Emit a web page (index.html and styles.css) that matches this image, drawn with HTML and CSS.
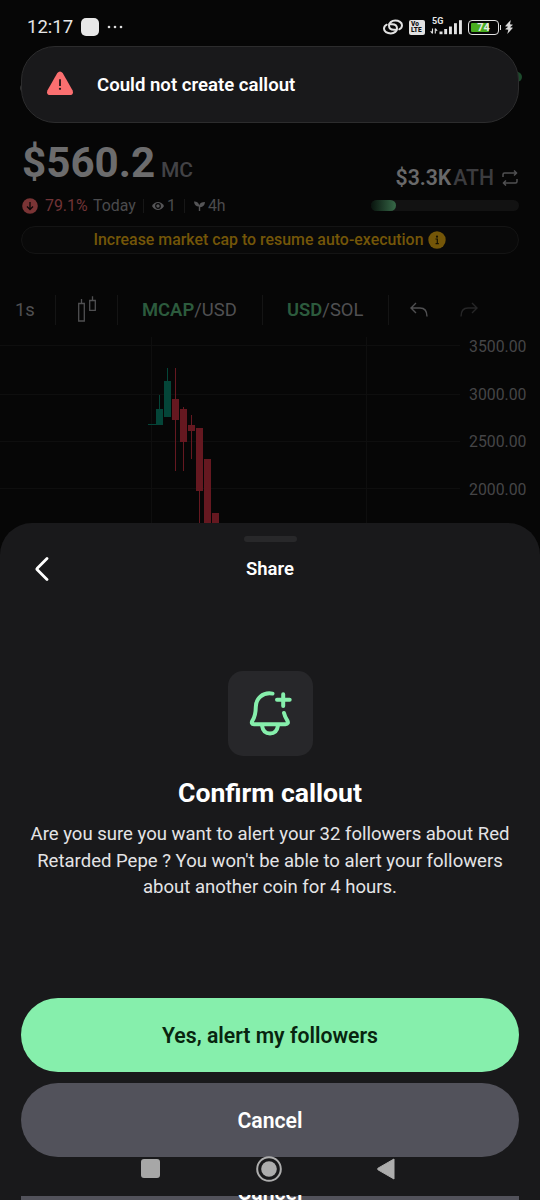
FILE: index.html
```html
<!DOCTYPE html>
<html lang="en">
<head>
<meta charset="utf-8">
<title>Share</title>
<link rel="stylesheet" href="styles.css">
</head>
<body>
<div class="phone">
  <header class="status">
    <span class="clock">12:17</span>
    <span class="app-dot"></span>
    <svg class="more" width="16" height="4" viewBox="0 0 16 4" fill="#ddd"><circle cx="2" cy="2" r="1.300"/><circle cx="8" cy="2" r="1.300"/><circle cx="14" cy="2" r="1.300"/></svg>
    <svg class="link" width="22" height="18" viewBox="0 0 22 18" fill="none" stroke="#e2e2e2" stroke-width="2" stroke-linecap="round"><path d="M14.500 11.800H12C8.700 11.800 7 10 7 7.500S9.500 2.600 13.200 2.600S20 4.600 20 7.200C20 9 19 10.500 17.300 11.300"/><path d="M7.500 6.200H10C13.300 6.200 15 8 15 10.500S12.500 15.400 8.800 15.400S2 13.400 2 10.800C2 9 3 7.500 4.700 6.700"/></svg>
    <span class="volte"><span>Vo</span><span>LTE</span></span>
    <span class="signal">
      <b>5G</b>
      <svg width="33" height="16" viewBox="0 0 33 16" fill="#e2e2e2"><path d="M2.500 9.500v5M.7 12.200l1.800 2.300M5.300 14.500v-5M5.300 9.500l1.800 2.300" fill="none" stroke="#e2e2e2" stroke-width="1.100"/><rect x="9.500" y="12.500" width="3" height="2.700"/><rect x="14.200" y="10" width="2.900" height="5.200"/><rect x="19" y="7.500" width="2.900" height="7.700"/><rect x="24" y="4.200" width="2.900" height="11"/><rect x="29" y="1.200" width="2.900" height="14"/></svg>
    </span>
    <span class="battery"><i></i><b>74</b></span>
    <span class="tip"></span>
    <svg class="bolt" width="10" height="16" viewBox="0 0 10 16" fill="#d8d8d8"><path d="M6.800 1L1 7.200l3.200.6L1 10.300l3.300.4L3.300 15L9 8.800l-3-.5L9 5.700l-3-.4z"/></svg>
  </header>

  <main class="coin">
    <div class="peek"><span class="peek-left"></span><span class="peek-right"></span></div>
    <section class="stats">
      <div class="stats-left">
        <div class="price"><strong>$560.2</strong><span>MC</span></div>
        <div class="meta">
          <svg class="down" width="16" height="16" viewBox="0 0 16 16"><circle cx="8" cy="8" r="7.800" fill="#7a3435"/><path d="M8 4v7.400M5 8.500L8 11.500l3-3" fill="none" stroke="#0b0707" stroke-width="1.300"/></svg>
          <span class="loss">79.1%</span><span class="today">Today</span>
          <i class="bar"></i>
          <svg class="eye" width="12" height="10" viewBox="0 0 12 10"><path d="M0 5C2.800-.3 9.200-.3 12 5C9.200 10.300 2.800 10.300 0 5z" fill="#555557"/><circle cx="6" cy="5" r="2.300" fill="#555557" stroke="#060606" stroke-width="1.200"/></svg>
          <span>1</span>
          <i class="bar second"></i>
          <svg class="sprout" width="11" height="10" viewBox="0 0 11 10" fill="#555557"><path d="M0 .5C3 .4 4.700 1.800 5.300 4.200C6 2 7.600 1 11 1C10.800 4.200 9 6 6.200 6.200L6.200 10H4.800V5.600C2 5.600.3 3.700 0 .5z"/></svg>
          <span class="age">4h</span>
        </div>
      </div>
      <div class="stats-right">
        <div class="ath"><strong>$3.3K</strong><span>ATH</span>
          <svg width="16" height="16" viewBox="0 0 16 16" fill="none" stroke="#505052" stroke-width="1.500" stroke-linejoin="round"><path d="M1 7V4.500q0-1.500 1.500-1.500H14.500M12 .5L14.600 3L12 5.500M15 9v2.500q0 1.500-1.500 1.500H1.500M4 10.500L1.400 13L4 15.500"/></svg>
        </div>
        <div class="progress"><i></i></div>
      </div>
    </section>
    <div class="notice"><span>Increase market cap to resume auto-execution</span>
      <svg width="18" height="18" viewBox="0 0 18 18"><circle cx="9" cy="9" r="8.700" fill="#745608"/><circle cx="9" cy="5.700" r="1.100" fill="#171202"/><path d="M7.500 8H9.300V12.500M7.600 12.600H10.800" stroke="#171202" stroke-width="1.200" fill="none"/></svg>
    </div>
    <nav class="tools">
      <span class="interval">1s</span>
      <span class="type"><svg width="20" height="28" viewBox="0 0 20 28" fill="none" stroke="#505052" stroke-width="1.300"><path d="M1.700 7.500h5.600v17.500H1.700zM4.500 3v4.500M12.700 4.500h5.600v9.800h-5.600zM15.500 .2v4.300"/></svg></span>
      <span class="pair mc"><b>MCAP</b>/USD</span>
      <span class="pair sol"><b>USD</b>/SOL</span>
      <span class="history">
        <svg width="18" height="16" viewBox="0 0 18 16" fill="none" stroke="#505052" stroke-width="1.400"><path d="M6 1L1 6l5 5M1 6h9q7 0 7 8.500"/></svg>
        <svg width="18" height="16" viewBox="0 0 18 16" fill="none" stroke="#262627" stroke-width="1.400"><path d="M12 1l5 5l-5 5M17 6H8Q1 6 1 14.500"/></svg>
      </span>
    </nav>
    <section class="chart">
      <svg class="plot" width="460" height="188" viewBox="0 0 460 188">
        <path d="M0 8.500H460M0 57.500H460M0 104.500H460M0 151.500H460M151.500 0V188M366.500 0V188" stroke="#0e0e0e"/>
        <g fill="#044538"><rect x="148" y="87" width="8" height="1"/><rect x="156" y="72" width="7" height="16"/><rect x="159" y="58" width="1" height="15"/><rect x="164" y="44" width="7" height="36"/><rect x="167" y="31" width="1" height="14"/></g>
        <g fill="#651820"><rect x="172" y="62" width="7" height="21"/><rect x="175" y="31" width="1" height="103"/><rect x="180" y="72" width="7" height="33"/><rect x="183" y="70" width="1" height="64"/><rect x="188" y="88" width="7" height="6"/><rect x="191" y="78" width="1" height="44"/><rect x="196" y="91" width="7" height="63"/><rect x="199" y="154" width="1" height="34"/><rect x="204" y="122" width="7" height="66"/><rect x="212" y="176" width="7" height="12"/></g>
      </svg>
      <div class="scale"><span>3500.00</span><span>3000.00</span><span>2500.00</span><span>2000.00</span></div>
    </section>
  </main>

  <div class="toast">
    <svg width="28" height="25" viewBox="0 0 28 26"><path d="M11.200 2.200Q14-1.400 16.800 2.200L27 20Q28.800 24.800 24 25H4Q-.8 24.800 1 20z" fill="#fb6f70"/><path d="M14 8.500v7" stroke="#24191b" stroke-width="1.900"/><circle cx="14" cy="18.500" r="1.200" fill="#24191b"/></svg>
    <span>Could not create callout</span>
  </div>

  <section class="sheet">
    <div class="grip"></div>
    <div class="sheet-head">
      <svg width="14" height="26" viewBox="0 0 14 26" fill="none" stroke="#fff" stroke-width="2.800" stroke-linecap="round" stroke-linejoin="round"><path d="M12 2.500L2.300 12.200q-.8.800 0 1.600L12 23.500"/></svg>
      <h2>Share</h2>
    </div>
    <div class="bell">
      <svg width="44" height="48" viewBox="0 0 44 48" fill="none" stroke="#86efac" stroke-width="4" stroke-linecap="round" stroke-linejoin="round"><path d="M24.500 4.600C14.500 3 8 9.300 7.800 18C7.700 25.500 6.500 28.500 4.500 31.500C3.200 33.800 3.800 35.200 6 35.200H37.500C39.800 35.200 40.500 33.800 39.300 31.500C37.600 28.600 36.500 26.700 36 24M14 36.500C14.800 42 18 44.500 22 44.500S29.200 42 30 36.500M35.200 5.200V17M29 10.800H41.700"/></svg>
    </div>
    <h1>Confirm callout</h1>
    <p>Are you sure you want to alert your 32 followers about Red<br>Retarded Pepe ? You won't be able to alert your followers<br>about another coin for 4 hours.</p>
    <div class="actions">
      <button class="yes">Yes, alert my followers</button>
      <button class="cancel">Cancel</button>
    </div>
    <div class="edge"><span>Cancel</span></div>
  </section>

  <nav class="system">
    <span class="recent"></span>
    <svg class="home" width="26" height="26" viewBox="0 0 26 26"><circle cx="13" cy="13" r="11.800" fill="none" stroke="#adadad" stroke-width="2"/><circle cx="13" cy="13" r="7.800" fill="#adadad"/></svg>
    <svg class="back" width="18" height="22" viewBox="0 0 18 22"><path d="M17 1v20L1 11.800q-1-.8 0-1.600z" fill="#adadad" stroke="#adadad" stroke-linejoin="round"/></svg>
  </nav>
</div>
</body>
</html>
```

FILE: styles.css
```css
* { box-sizing: border-box; }
body { margin: 0; background: #060606; font-family: Roboto, sans-serif; }
svg { display: block; flex: none; }
h1, h2, p { margin: 0; }
.phone { position: relative; width: 540px; height: 1200px; overflow: hidden; background: #060606; }

.status { display: flex; align-items: center; height: 54px; padding-left: 27px; color: #e6e6e6; }
.clock { width: 46px; margin-right: 8px; font-size: 18.500px; line-height: 56px; white-space: nowrap; }
.app-dot { width: 18px; height: 18px; border-radius: 5px; background: #e8e8e8; }
.more { margin-left: 8px; }
.link { margin-left: 259px; }
.volte { display: flex; flex-direction: column; justify-content: center; width: 16px; height: 15px; margin-left: 5px; padding-left: 2px; border-radius: 2px; background: #e2e2e2; color: #111; font-size: 6.500px; font-weight: 900; line-height: 6.500px; }
.signal { position: relative; margin-left: 5px; }
.signal b { position: absolute; left: 2px; top: -3px; font-size: 9px; line-height: 10px; }
.battery { position: relative; display: flex; align-items: center; justify-content: center; width: 31px; height: 15px; margin-left: 5px; border: 1.500px solid #e2e2e2; border-radius: 4px; }
.battery i { position: absolute; left: 2px; top: 2px; width: 18px; height: 9px; border-radius: 1px; background: #49ad20; }
.battery b { position: relative; font-size: 11px; line-height: 13px; }
.tip { width: 1px; height: 5px; margin-left: 1px; background: #e2e2e2; }
.bolt { margin-left: 3px; }

.coin { color: #505052; }
.peek { display: flex; justify-content: space-between; height: 86px; padding: 18px 18px 0 20px; }
.peek-left { width: 10px; height: 10px; margin-top: 11px; border-radius: 50%; background: #343434; }
.peek-right { width: 10px; height: 10px; border-radius: 50%; background: #1d4a2c; }
.stats { display: flex; justify-content: space-between; height: 86px; padding: 0 21px 0 22px; }
.price { display: flex; align-items: baseline; height: 52px; line-height: 46px; }
.price strong { width: 139px; color: #6c6c6d; font-size: 42.200px; }
.price span { font-size: 21px; font-weight: 500; color: #424245; }
.meta { display: flex; align-items: center; height: 26px; margin-top: 1px; font-size: 15.900px; line-height: 26px; color: #4b4b4d; }
.loss { width: 43px; margin: 0 5px 0 7px; color: #713437; }
.today { width: 43px; }
.bar { width: 1px; height: 14px; margin: 0 8px 0 7px; background: #171717; }
.bar.second { margin: 0 9px 0 8px; }
.eye, .sprout { margin-right: 3px; }
.stats-right { display: flex; flex-direction: column; align-items: flex-end; padding-top: 25px; }
.ath { display: flex; align-items: center; height: 26px; padding-right: 1px; font-size: 21.200px; font-weight: 500; line-height: 26px; color: #3c3c3f; }
.ath strong { margin-right: 2px; color: #69696a; font-weight: 600; }
.ath svg { margin-left: 8px; }
.progress { width: 148px; height: 11px; margin-top: 9px; border-radius: 6px; background: #121212; }
.progress i { display: block; width: 25px; height: 11px; border-radius: 6px; background: linear-gradient(90deg, #08130d, #376948); }
.notice { display: flex; align-items: center; justify-content: center; gap: 5px; height: 28px; margin: 0 21px; border: 1px solid #141414; border-radius: 14px; background: #090909; color: #745608; font-size: 15.900px; font-weight: 500; line-height: 26px; white-space: nowrap; }

.tools { display: flex; align-items: center; height: 56px; margin-top: 28px; font-size: 18.400px; line-height: 30px; }
.tools > span { display: flex; align-items: center; height: 30px; border-right: 1px solid #141414; }
.interval { width: 56px; padding-left: 15px; }
.type { width: 62px; padding-left: 21px; }
.pair b { font-weight: 600; color: #2c5b3d; }
.mc { width: 145px; padding-left: 24px; }
.sol { width: 126px; padding-left: 24px; }
.tools > .history { gap: 32px; padding-left: 21px; border: 0; }
.chart { display: flex; height: 188px; margin-top: -1px; }
.scale { width: 80px; padding-left: 9px; font-size: 15.800px; line-height: 20px; color: #454547; }
.scale span { display: block; height: 47.700px; white-space: nowrap; }

.toast { position: absolute; left: 21px; top: 46px; display: flex; align-items: center; width: 498px; height: 77px; padding: 0 0 1px 24px; border: 1px solid #2c2c2d; border-radius: 34px; background: #19191b; color: #fff; font-size: 18.600px; font-weight: 600; }
.toast svg { margin-bottom: 1px; }
.toast span { margin: 1px 0 0 23px; }

.sheet { position: absolute; left: 0; top: 523px; display: flex; flex-direction: column; align-items: center; width: 540px; height: 677px; border-radius: 32px 32px 0 0; background: #19191b; color: #fff; overflow: hidden; }
.grip { width: 53px; height: 6px; margin-top: 13px; border-radius: 3px; background: #28282a; }
.sheet-head { display: grid; grid-template-columns: 1fr auto 1fr; align-items: center; width: 100%; height: 26px; margin-top: 13px; padding: 0 35px; }
h2 { padding-top: 1px; font-size: 18.500px; font-weight: 600; line-height: 26px; }
.bell { display: flex; justify-content: center; width: 85px; height: 85px; margin-top: 90px; padding-top: 18px; border-radius: 15px; background: #27272a; }
h1 { margin-top: 19px; font-size: 26.600px; font-weight: 700; line-height: 36px; }
p { margin-top: 10px; font-size: 18.550px; line-height: 26.600px; color: #e4e4e6; text-align: center; white-space: nowrap; }
.actions { display: grid; gap: 11px; width: 498px; margin-top: 97px; }
button { height: 74px; padding: 0; border: 0; border-radius: 37px; color: #fff; background: #52525b; font: 600 21.200px/75px Roboto, sans-serif; }
button.yes { color: #08250f; background: #86efac; }
.edge { display: flex; align-items: flex-end; justify-content: center; width: 498px; height: 5px; margin-top: auto; background: linear-gradient(#19191b 1.500px, #52525b 1.500px); overflow: hidden; font-size: 21.200px; font-weight: 600; line-height: 10px; }
.edge span { margin-bottom: 2px; }

.system { position: absolute; left: 0; bottom: 16.500px; display: flex; align-items: center; width: 540px; height: 30px; padding-left: 141px; }
.recent { width: 19px; height: 19px; border-radius: 3px; background: #a7a7a7; }
.home { margin-left: 96px; }
.back { margin-left: 95px; }
```
